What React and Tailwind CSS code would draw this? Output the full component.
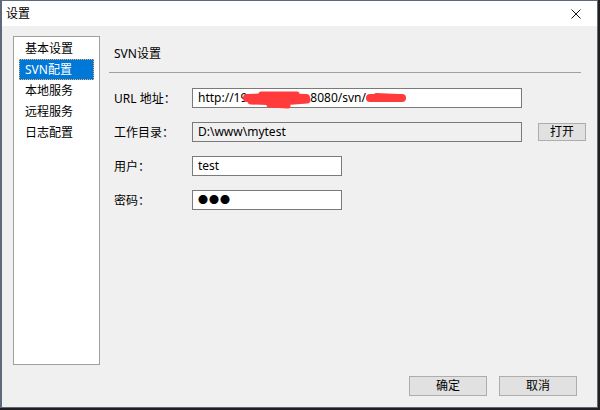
import React from 'react'

const font = { fontFamily: '"Noto Sans", "Noto Sans CJK SC", sans-serif' }
const cjk = { fontFamily: '"Noto Sans CJK SC", sans-serif' }

const menu = ['基本设置', 'SVN配置', '本地服务', '远程服务', '日志配置']

function Row({ label, children }) {
  return (
    <div className="flex items-center h-[20px]">
      <div className="w-[83px] shrink-0 pl-[5px] text-[12px] text-black">
        {label}
        <span style={cjk}>：</span>
      </div>
      {children}
    </div>
  )
}

function Field({ value, width, readOnly, children }) {
  return (
    <div
      className={
        'relative shrink-0 h-[20px] border border-[#7a7a7a] pl-[5px] flex items-center text-[12px] text-black whitespace-nowrap ' +
        (readOnly ? 'bg-[#f0f0f0]' : 'bg-white')
      }
      style={{ width }}
    >
      {value}
      {children}
    </div>
  )
}

function Scribble() {
  return (
    <svg className="absolute left-0 top-[-1px]" width="330" height="22" viewBox="0 0 330 22">
      <g stroke="#ff3b3b" strokeLinecap="round" strokeLinejoin="round" fill="none">
        <path d="M54 10 L80 9 L113 10" strokeWidth="8" />
        <path d="M58 13 L88 14 L114 12" strokeWidth="7" />
        <path d="M68 6 L104 6" strokeWidth="5" />
        <path d="M76 17 L95 18" strokeWidth="5" />
        <path d="M177 10 L209 10" strokeWidth="8" />
        <path d="M183 7 L205 8" strokeWidth="4" />
      </g>
    </svg>
  )
}

function Button({ children, w = 'w-[78px]', h = 'h-[20px]' }) {
  return (
    <div
      className={
        w + ' ' + h + ' shrink-0 border border-[#adadad] bg-[#e1e1e1] flex items-center justify-center text-[12px] text-black'
      }
    >
      {children}
    </div>
  )
}

export default function App() {
  return (
    <div className="w-[600px] h-[410px] bg-[#202020] overflow-hidden" style={font}>
      <div className="w-[598px] h-[408px] border border-l-2 border-[#5f6a78] bg-[#f0f0f0] flex flex-col">
        {/* title bar */}
        <div className="h-[25px] bg-white flex items-center justify-between pl-[4px] pr-[16px]">
          <span className="text-[12px] text-black">设置</span>
          <svg width="10" height="10" viewBox="0 0 10 10">
            <path d="M0.5 0.5 L9.5 9.5 M9.5 0.5 L0.5 9.5" stroke="#111" strokeWidth="1" />
          </svg>
        </div>

        <div className="flex pt-[10px] pl-[11px]">
          {/* left list */}
          <div className="w-[87px] h-[329px] border border-[#a0a0a0] bg-white pt-[1px]">
            {menu.map((m) => (
              <div
                key={m}
                className={
                  'h-[21px] mx-[5px] px-[5px] flex items-center text-[12px] ' +
                  (m === 'SVN配置'
                    ? 'bg-[#0078d7] text-white border border-dotted border-[#f5b060]'
                    : 'text-black border border-transparent')
                }
              >
                {m}
              </div>
            ))}
          </div>

          {/* right panel */}
          <div className="ml-[9px] w-[472px] flex flex-col">
            <div className="h-[37px] flex items-center pl-[5px] text-[12px] text-black border-b border-[#a0a0a0]">
              SVN设置
            </div>
            <div className="mt-[15px] flex flex-col gap-[14px]">
              <Row label="URL 地址">
                <Field
                  value={
                    <>
                      http://19<span className="inline-block w-[63px]" />8080/svn/
                    </>
                  }
                  width={330}
                >
                  <Scribble />
                </Field>
              </Row>
              <Row label="工作目录">
                <Field value="D:\www\mytest" width={330} readOnly />
                <div className="ml-[16px]">
                  <Button w="w-[48px]" h="h-[18px]">打开</Button>
                </div>
              </Row>
              <Row label="用户">
                <Field value="test" width={150} />
              </Row>
              <Row label="密码">
                <Field value={<span className="tracking-[1px] text-[10px]">●●●</span>} width={150} />
              </Row>
            </div>
          </div>
        </div>

        {/* bottom buttons */}
        <div className="flex justify-end gap-[12px] pr-[20px] mt-[11px]">
          <Button>确定</Button>
          <Button>取消</Button>
        </div>
      </div>
    </div>
  )
}
